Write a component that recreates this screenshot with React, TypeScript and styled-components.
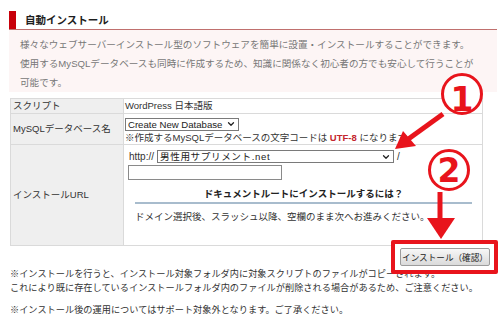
import React from 'react';
import styled, { createGlobalStyle } from 'styled-components';
import { ChevronDown } from 'lucide-react';

const GlobalStyle = createGlobalStyle`
  body {
    margin: 0;
    background: #ffffff;
    font-family: 'Liberation Sans', 'Noto Sans CJK JP', sans-serif;
    color: #333333;
  }
`;

const RED = '#e8141c';

const App = () => {
  return (
    <>
      <GlobalStyle />
      <S.Page>
        <S.SectionHead>
          <S.HeadBar />
          <S.HeadTitle>自動インストール</S.HeadTitle>
        </S.SectionHead>
        <S.Lead>
          様々なウェブサーバーインストール型のソフトウェアを簡単に設置・インストールすることができます。
          <br />
          使用するMySQLデータベースも同時に作成するため、知識に関係なく初心者の方でも安心して行うことが
          <br />
          可能です。
        </S.Lead>

        <S.FormTable>
          <tbody>
            <tr>
              <S.LabelCell $h={14}>スクリプト</S.LabelCell>
              <S.ValueCell>WordPress 日本語版</S.ValueCell>
            </tr>
            <tr>
              <S.LabelCell $h={28}>MySQLデータベース名</S.LabelCell>
              <S.ValueCell $pad="3px 0 0 1px">
                <S.SelectBox $w={114}>
                  <S.Select defaultValue="new">
                    <option value="new">Create New Database</option>
                  </S.Select>
                  <S.Caret size={10} strokeWidth={3} />
                </S.SelectBox>
                <S.Note>
                  ※作成するMySQLデータベースの文字コードは <S.Emph>UTF-8</S.Emph> になります。
                </S.Note>
              </S.ValueCell>
            </tr>
            <tr>
              <S.LabelCell $h={100}>インストールURL</S.LabelCell>
              <S.ValueCell $pad="5px 4px 0 4px" $top>
                <S.UrlLine>
                  <span>http://</span>
                  <S.SelectBox $w={237}>
                    <S.Select defaultValue="d" $spaced>
                      <option value="d">男性用サプリメント.net</option>
                    </S.Select>
                    <S.Caret size={10} strokeWidth={3} />
                  </S.SelectBox>
                  <span>/</span>
                </S.UrlLine>
                <S.PathInput type="text" />
                <S.Guide>
                  <S.GuideTitle>ドキュメントルートにインストールするには？</S.GuideTitle>
                  <S.GuideText>ドメイン選択後、スラッシュ以降、空欄のまま次へお進みください。</S.GuideText>
                </S.Guide>
              </S.ValueCell>
            </tr>
          </tbody>
        </S.FormTable>

        <S.Actions>
          <S.ButtonFrame>
            <S.SubmitButton type="button">インストール（確認）</S.SubmitButton>
          </S.ButtonFrame>
        </S.Actions>

        <S.Notes>
          <p>
            ※インストールを行うと、インストール対象フォルダ内に対象スクリプトのファイルがコピーされます。
            <br />
            これにより既に存在しているインストールフォルダ内のファイルが削除される場合があるため、ご注意ください。
          </p>
          <p>※インストール後の運用についてはサポート対象外となります。ご了承ください。</p>
        </S.Notes>

        <S.Marks viewBox="0 0 503 320" width={503} height={320}>
          <circle cx={462} cy={94} r={19.5} fill="#fff" stroke={RED} strokeWidth={3} />
          <text x={462} y={111} textAnchor="middle" fontFamily="DejaVu Sans" fontWeight="bold" fontSize={33} fill={RED}>
            1
          </text>
          <line x1={443} y1={114} x2={407} y2={140} stroke={RED} strokeWidth={5} />
          <polygon points="395,149 403,131 416,146" fill={RED} />

          <circle cx={449} cy={170} r={19.5} fill="#fff" stroke={RED} strokeWidth={3} />
          <text x={449} y={182} textAnchor="middle" fontFamily="DejaVu Sans" fontWeight="bold" fontSize={33} fill={RED}>
            2
          </text>
          <line x1={440} y1={192} x2={440} y2={220} stroke={RED} strokeWidth={5} />
          <polygon points="427,218 455,218 441,239" fill={RED} />
        </S.Marks>
      </S.Page>
    </>
  );
};

export default App;

const S = {
  Page: styled.div`
    position: relative;
    box-sizing: border-box;
    width: 503px;
    height: 320px;
    overflow: hidden;
    padding: 11px 6px 0 9px;
  `,
  SectionHead: styled.div`
    display: flex;
    align-items: center;
    height: 18px;
    border-bottom: 1px solid #c0706e;
  `,
  HeadBar: styled.span`
    align-self: stretch;
    width: 7px;
    background: #c8000a;
  `,
  HeadTitle: styled.h2`
    margin: 0 0 0 9px;
    font-family: 'Noto Sans CJK JP', sans-serif;
    font-size: 10.5px;
    font-weight: 700;
    color: #1e1e1e;
    line-height: 18px;
  `,
  Lead: styled.p`
    box-sizing: border-box;
    height: 62px;
    margin: 0;
    padding: 5px 0 0 11px;
    background: #fdf5f5;
    color: #777777;
    font-size: 9.6px;
    line-height: 19px;
    white-space: nowrap;
  `,
  FormTable: styled.table`
    width: 473px;
    margin: 6px 0 0 1px;
    border-collapse: collapse;
    font-size: 9.5px;
    color: #333333;
    td {
      border: 1px solid #dadada;
    }
  `,
  LabelCell: styled.td<{ $h: number }>`
    width: 108px;
    height: ${p => p.$h}px;
    padding: 0 2px;
    background: #efefef;
    line-height: 14px;
    vertical-align: middle;
    white-space: nowrap;
  `,
  ValueCell: styled.td<{ $pad?: string; $top?: boolean }>`
    padding: ${p => p.$pad || '0 1px'};
    line-height: 14px;
    vertical-align: ${p => (p.$top ? 'top' : 'middle')};
    white-space: nowrap;
  `,
  SelectBox: styled.span<{ $w: number }>`
    display: inline-flex;
    align-items: center;
    box-sizing: border-box;
    width: ${p => p.$w}px;
    height: 13px;
    padding-right: 2px;
    border: 1px solid #7a7a7a;
    background: #ffffff;
    vertical-align: middle;
  `,
  Select: styled.select<{ $spaced?: boolean }>`
    flex: 1;
    min-width: 0;
    height: 11px;
    margin: 0;
    padding: 0 0 0 2px;
    border: 0;
    appearance: none;
    background: transparent;
    font-family: 'Liberation Sans', 'Noto Sans CJK JP', sans-serif;
    font-size: 9.6px;
    line-height: 11px;
    color: #222222;
    letter-spacing: ${p => (p.$spaced ? '0.6px' : '0')};
    outline: none;
  `,
  Caret: styled(ChevronDown)`
    flex-shrink: 0;
    color: #222222;
  `,
  Note: styled.div`
    line-height: 13px;
  `,
  Emph: styled.span`
    color: #c4262e;
    font-weight: 700;
  `,
  UrlLine: styled.div`
    display: flex;
    align-items: center;
    gap: 3px;
    height: 13px;
    font-size: 10px;
    span:first-child {
      margin-left: 1px;
    }
  `,
  PathInput: styled.input`
    display: block;
    box-sizing: border-box;
    width: 154px;
    height: 15px;
    margin: 2px 0 0;
    padding: 0;
    border: 1px solid #8a8a8a;
    background: #ffffff;
  `,
  Guide: styled.div`
    width: 337px;
    margin: 7px 0 0 7px;
  `,
  GuideTitle: styled.div`
    padding-bottom: 1px;
    border-bottom: 2px solid #a8bccd;
    text-align: center;
    font-weight: 700;
    line-height: 14px;
    color: #222222;
  `,
  GuideText: styled.div`
    margin-top: 6px;
    line-height: 14px;
  `,
  Actions: styled.div`
    display: flex;
    justify-content: flex-end;
    margin: -6px -1px -7px 0;
  `,
  ButtonFrame: styled.div`
    position: relative;
    z-index: 1;
    display: flex;
    padding: 4px 4px 4px 5px;
    border: 4px solid ${RED};
    border-radius: 2px;
    background: #ffffff;
  `,
  SubmitButton: styled.button`
    box-sizing: border-box;
    width: 90px;
    height: 18px;
    margin: 0;
    padding: 0;
    border: 1px solid #9c9c9c;
    border-radius: 2px;
    background: linear-gradient(#f7f7f7, #dadada);
    font-family: 'Noto Sans CJK JP', sans-serif;
    font-size: 8.6px;
    color: #222222;
  `,
  Notes: styled.div`
    padding-left: 1px;
    font-size: 9.2px;
    line-height: 14px;
    color: #333333;
    white-space: nowrap;
    p {
      margin: 0 0 8px;
    }
  `,
  Marks: styled.svg`
    position: absolute;
    top: 0;
    left: 0;
    z-index: 2;
    pointer-events: none;
  `
};
